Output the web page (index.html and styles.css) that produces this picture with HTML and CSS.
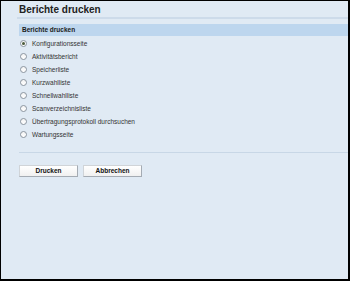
FILE: index.html
```html
<!DOCTYPE html>
<html lang="de">
  <head>
    <meta charset="UTF-8" />
    <title>Berichte drucken</title>
    <link rel="stylesheet" href="styles.css">
  </head>
  <body>
    <div class="screen">
      <h1 class="page-title">Berichte drucken</h1>
      <div class="section">
        <div class="section-head">Berichte drucken</div>
        <ul class="report-list">
          <li><span class="radio checked"></span>Konfigurationsseite</li>
          <li><span class="radio"></span>Aktivitätsbericht</li>
          <li><span class="radio"></span>Speicherliste</li>
          <li><span class="radio"></span>Kurzwahlliste</li>
          <li><span class="radio"></span>Schnellwahlliste</li>
          <li><span class="radio"></span>Scanverzeichnisliste</li>
          <li><span class="radio"></span>Übertragungsprotokoll durchsuchen</li>
          <li><span class="radio"></span>Wartungsseite</li>
        </ul>
      </div>
      <div class="actions">
        <button class="btn">Drucken</button>
        <button class="btn">Abbrechen</button>
      </div>
    </div>
  </body>
</html>
```

FILE: styles.css
```css
body {
  margin: 0;
  font-family: "Liberation Sans", Arial, sans-serif;
  color: #1e1e1e;
}
.screen {
  box-sizing: border-box;
  width: 350px;
  height: 281px;
  border: 1px solid #000;
  border-right-width: 2px;
  border-bottom-width: 2px;
  background-color: #e0eaf4;
  overflow: hidden;
}
.page-title {
  margin: 0 0 0 16px;
  padding: 3px 0 1px 2px;
  font-size: 10px;
  line-height: 12px;
  font-weight: bold;
  color: #222;
  border-bottom: 2px solid #cddbea;
}
.section {
  margin: 5px 0 0 18px;
}
.section-head {
  height: 12px;
  line-height: 12px;
  padding-left: 3px;
  background-color: #bdd6ee;
  font-size: 6.5px;
  font-weight: bold;
  color: #1a1a1a;
}
.report-list {
  list-style: none;
  margin: 0;
  padding: 0.5px 0 0 0;
}
.report-list li {
  display: flex;
  align-items: center;
  height: 13px;
  font-size: 6.5px;
  color: #333;
}
.radio {
  box-sizing: border-box;
  width: 7px;
  height: 7px;
  margin: 0 5px 0 1px;
  border: 1px solid #8c959f;
  border-radius: 50%;
  background: linear-gradient(#f4f4f4, #ffffff);
  display: flex;
  align-items: center;
  justify-content: center;
}
.radio.checked::after {
  content: "";
  width: 3px;
  height: 3px;
  border-radius: 50%;
  background-color: #4a5a3a;
}
.actions {
  margin: 11.5px 0 0 18px;
  padding-top: 12px;
  border-top: 1px solid #c8d7e6;
  display: flex;
  gap: 5px;
}
.btn {
  box-sizing: border-box;
  width: 59px;
  height: 12px;
  padding: 0;
  border: 1px solid #a4abb3;
  border-top-color: #d0d4d8;
  border-left-color: #d0d4d8;
  background: linear-gradient(#ffffff, #f0f0f0);
  font-family: "Liberation Sans", Arial, sans-serif;
  font-size: 6.5px;
  font-weight: bold;
  line-height: 10px;
  color: #111;
}
```
